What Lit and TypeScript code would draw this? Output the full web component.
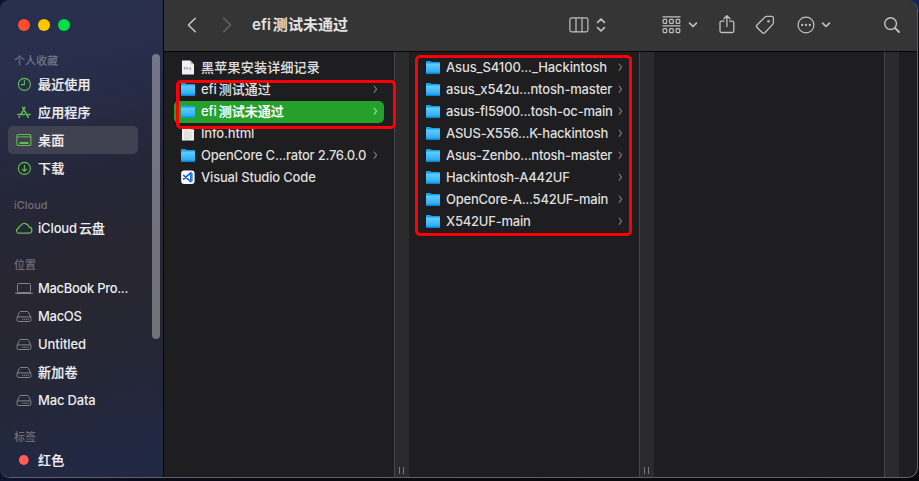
import { LitElement, html, css, svg } from "lit";
import { customElement, property } from "lit/decorators.js";

const icons: Record<string, unknown> = {
  clock: svg`<svg width="16" height="16" viewBox="0 0 16 16"><g fill="none" stroke="currentColor" stroke-width="1.1"><circle cx="8.4" cy="8.4" r="6"/><path d="M8.4 4.4V8.6H5.2" stroke-linecap="round"/></g></svg>`,
  apps: svg`<svg width="16" height="16" viewBox="0 0 16 16"><g fill="none" stroke="currentColor" stroke-width="1.5" stroke-linecap="round"><path d="M6.6 3.4L12.3 13.4M8.9 3.4L4.9 10.4M1.7 10.6H8.6M11.6 10.6H14.1M3.6 12.6L3.2 13.3"/></g></svg>`,
  desktop: svg`<svg width="16" height="16" viewBox="0 0 16 16"><rect x="0.9" y="2.5" width="14" height="11" rx="1.5" fill="none" stroke="currentColor" stroke-width="1.1"/><path d="M1 4.9H15" stroke="currentColor"/><rect x="3.5" y="10.1" width="9" height="1.8" rx=".5" fill="currentColor"/></svg>`,
  down: svg`<svg width="16" height="16" viewBox="0 0 16 16"><g fill="none" stroke="currentColor" stroke-width="1.1" stroke-linecap="round"><circle cx="8.4" cy="8.4" r="6"/><path d="M8.4 5.2V11.2M6.2 9.1L8.4 11.3L10.6 9.1"/></g></svg>`,
  cloud: svg`<svg width="18" height="16" viewBox="0 0 18 16"><path d="M4.6 13.2H13.6A3 3 0 0 0 14.1 7.2A4.7 4.7 0 0 0 5.4 5.9A2.3 2.3 0 0 0 3.6 8.3A2.5 2.5 0 0 0 4.6 13.2Z" fill="none" stroke="currentColor" stroke-width="1.2"/></svg>`,
  laptop: svg`<svg width="18" height="16" viewBox="0 0 18 16"><rect x="2.5" y="3.5" width="13" height="9" rx="1" fill="none" stroke="currentColor"/><path d="M.2 13.3H17.8" stroke="currentColor" stroke-width="1.2"/></svg>`,
  disk: svg`<svg width="16" height="16" viewBox="0 0 16 16"><g fill="none" stroke="currentColor"><path d="M1 9.6L3.3 4.6Q3.8 3.5 5 3.5H11Q12.2 3.5 12.7 4.6L15 9.6"/><rect x="1" y="8.9" width="14" height="4.6" rx="1.7"/><path d="M6 11.2H13" stroke-dasharray="1.4 .6"/></g></svg>`,
  tag: svg`<svg width="16" height="16" viewBox="0 0 16 16"><circle cx="7.8" cy="8" r="4.9" fill="#ff5d55"/></svg>`,
  folder: svg`<svg width="16" height="16" viewBox="0 0 16 16"><defs><linearGradient id="f" x2="0" y2="1"><stop stop-color="#62cdfb"/><stop offset=".5" stop-color="#45bbf8"/><stop offset="1" stop-color="#1da2f1"/></linearGradient></defs><path d="M1 2.6Q1 2 1.6 2H5.2L6.4 2.9H14.4Q15 2.9 15 3.6V13.8Q15 14.6 14.2 14.6H1.8Q1 14.6 1 13.8Z" fill="#1b9fe8"/><path d="M1 4.6H15V13.8Q15 14.6 14.2 14.6H1.8Q1 14.6 1 13.8Z" fill="url(#f)"/><path d="M1.2 14.1H14.8" stroke="#0d8bd9"/></svg>`,
  md: svg`<svg width="16" height="16" viewBox="0 0 16 16"><path d="M2 1.6H10.2L14 5.4V15.4H2Z" fill="#f1f1f1"/><path d="M10.2 1.6V5.4H14Z" fill="#c9c9c9"/><path d="M4.3 10.8V8L5.7 9.6L7.1 8V10.8M10.1 7.9V10.6M8.8 9.5L10.1 10.8L11.4 9.5" fill="none" stroke="#999" stroke-width=".9"/></svg>`,
  page: svg`<svg width="16" height="16" viewBox="0 0 16 16"><path d="M2 1.6H10.4L14 5.2V15.4H2Z" fill="#f1f1f1"/><path d="M10.4 1.6V5.2H14Z" fill="#ccc"/><path d="M4 6H9M4 8H12.2M4 10H12.2M4 12H12.2M4 13.7H10" stroke="#cacaca" stroke-width=".8"/></svg>`,
  code: svg`<svg width="16" height="16" viewBox="0 0 16 16"><rect x="1.2" y="1.5" width="13.4" height="13.4" rx="3" fill="#fff"/><path d="M10.8 3.8V12.6L3.6 6.4M10.8 3.8L3.6 10" fill="none" stroke="#2066cf" stroke-width="1.7" stroke-linejoin="round" stroke-linecap="round"/><path d="M10.8 3.2L12.7 4.2V12.2L10.8 13.2Z" fill="#3284e4"/></svg>`,
};

const toolIcons = {
  back: svg`<svg width="12" height="18" viewBox="0 0 12 18"><path d="M9.3 2.3L2.4 9L9.3 15.7" fill="none" stroke="#c5c5c5" stroke-width="1.6" stroke-linecap="round" stroke-linejoin="round"/></svg>`,
  forward: svg`<svg width="12" height="18" viewBox="0 0 12 18"><path d="M2.7 2.3L9.6 9L2.7 15.7" fill="none" stroke="#636363" stroke-width="1.6" stroke-linecap="round" stroke-linejoin="round"/></svg>`,
  columns: svg`<svg width="20" height="16" viewBox="0 0 20 16"><g fill="none" stroke="currentColor" stroke-width="1.2"><rect x=".9" y=".9" width="18" height="14" rx="1.8"/><path d="M7 1V15M13 1V15"/></g></svg>`,
  updown: svg`<svg width="10" height="16" viewBox="0 0 10 16"><path d="M1.6 5.4L5 2L8.4 5.4M1.6 10.6L5 14L8.4 10.6" fill="none" stroke="currentColor" stroke-width="1.7" stroke-linecap="round" stroke-linejoin="round"/></svg>`,
  group: svg`<svg width="19" height="18" viewBox="0 0 19 18"><g fill="none" stroke="currentColor" stroke-width="1.2"><path d="M.5 .8H18.5M.5 9.8H18.5"/><rect x="1.1" y="3.4" width="3.7" height="4" rx="1"/><rect x="7.6" y="3.4" width="3.7" height="4" rx="1"/><rect x="14.1" y="3.4" width="3.7" height="4" rx="1"/><rect x="1.1" y="12.7" width="3.7" height="4" rx="1"/><rect x="7.6" y="12.7" width="3.7" height="4" rx="1"/><rect x="14.1" y="12.7" width="3.7" height="4" rx="1"/></g></svg>`,
  chevron: svg`<svg width="10" height="8" viewBox="0 0 10 8"><path d="M1.6 2.2L5 5.5L8.4 2.2" fill="none" stroke="currentColor" stroke-width="1.7" stroke-linecap="round" stroke-linejoin="round"/></svg>`,
  share: svg`<svg width="16" height="20" viewBox="0 0 16 20"><g fill="none" stroke="currentColor" stroke-width="1.3" stroke-linecap="round" stroke-linejoin="round"><path d="M5 6.2H2.6Q1 6.2 1 7.8V16Q1 17.5 2.6 17.5H13.2Q14.8 17.5 14.8 16V7.8Q14.8 6.2 13.2 6.2H10.8M7.9 11.6V1M4.9 3.8L7.9 .8L10.9 3.8"/></g></svg>`,
  label: svg`<svg width="20" height="20" viewBox="0 0 20 20"><path d="M11.5 1.4H16.6Q18.4 1.4 18.4 3.2V7.8Q18.4 8.7 17.7 9.4L9.8 17.8Q8.6 19 7.4 17.8L1.9 12.3Q.9 11.2 2 10L9.9 2.1Q10.6 1.4 11.5 1.4Z" fill="none" stroke="currentColor" stroke-width="1.3"/><circle cx="13.5" cy="6.2" r="1.2" fill="currentColor"/></svg>`,
  more: svg`<svg width="18" height="18" viewBox="0 0 18 18"><circle cx="9" cy="9" r="7.9" fill="none" stroke="currentColor" stroke-width="1.2"/><g fill="currentColor"><circle cx="5.2" cy="9" r="1.15"/><circle cx="9" cy="9" r="1.15"/><circle cx="12.8" cy="9" r="1.15"/></g></svg>`,
  search: svg`<svg width="18" height="18" viewBox="0 0 18 18"><circle cx="7.6" cy="7.6" r="5.9" fill="none" stroke="currentColor" stroke-width="1.4"/><path d="M11.9 11.9L16 16" stroke="currentColor" stroke-width="1.9" stroke-linecap="round"/></svg>`,
};

// width: label width in pixels, spread evenly over the glyphs
interface Entry { icon: string; name: string; width: number; dir?: boolean; selected?: boolean; grey?: boolean }

const sidebar: { title: string; items: Entry[] }[] = [
  { title: "个人收藏", items: [
    { icon: "clock", name: "最近使用", width: 52 },
    { icon: "apps", name: "应用程序", width: 52 },
    { icon: "desktop", name: "桌面", width: 26, selected: true },
    { icon: "down", name: "下载", width: 26 },
  ] },
  { title: "iCloud", items: [{ icon: "cloud", name: "iCloud云盘", width: 66 }] },
  { title: "位置", items: [
    { icon: "laptop", name: "MacBook Pro...", width: 89.5, grey: true },
    { icon: "disk", name: "MacOS", width: 43, grey: true },
    { icon: "disk", name: "Untitled", width: 47.5, grey: true },
    { icon: "disk", name: "新加卷", width: 39, grey: true },
    { icon: "disk", name: "Mac Data", width: 57, grey: true },
  ] },
  { title: "标签", items: [{ icon: "tag", name: "红色", width: 26 }] },
];

const first: Entry[] = [
  { icon: "md", name: "黑苹果安装详细记录", width: 118.5 },
  { icon: "folder", name: "efi测试通过", width: 69, dir: true },
  { icon: "folder", name: "efi测试未通过", width: 82, dir: true, selected: true },
  { icon: "page", name: "Info.html", width: 52.5 },
  { icon: "folder", name: "OpenCore C...rator 2.76.0.0", width: 164.5, dir: true },
  { icon: "code", name: "Visual Studio Code", width: 114 },
];

const second: Entry[] = [
  { icon: "folder", name: "Asus_S4100..._Hackintosh", width: 160.5, dir: true },
  { icon: "folder", name: "asus_x542u...ntosh-master", width: 165.5, dir: true },
  { icon: "folder", name: "asus-fl5900...tosh-oc-main", width: 166, dir: true },
  { icon: "folder", name: "ASUS-X556...K-hackintosh", width: 161.5, dir: true },
  { icon: "folder", name: "Asus-Zenbo...ntosh-master", width: 165.5, dir: true },
  { icon: "folder", name: "Hackintosh-A442UF", width: 123, dir: true },
  { icon: "folder", name: "OpenCore-A...542UF-main", width: 161.5, dir: true },
  { icon: "folder", name: "X542UF-main", width: 84, dir: true },
];

@customElement("fit-label")
class FitLabel extends LitElement {
  @property() text = "";
  @property({ type: Number }) width = 0;
  static styles = css`
    :host { display: block; white-space: nowrap; }
    .t { display: inline-block; }
    .cjk { -webkit-text-stroke: var(--cjk-stroke, 0.2px) currentColor; }
    .latin + .cjk { margin-left: 2px; }
  `;
  render() {
    const [, latin, cjk] = this.text.match(/^([\x00-\x7f]*)(.*)$/)!;
    return html`<span class="t">${latin ? html`<span class="latin">${latin}</span>` : ""}${cjk ? html`<span class="cjk">${cjk}</span>` : ""}</span>`;
  }
  updated() {
    const span = this.renderRoot.querySelector<HTMLElement>(".t")!;
    span.style.letterSpacing = "0px";
    const natural = span.getBoundingClientRect().width;
    span.style.letterSpacing = `${(this.width - natural + 0.6) / this.text.length}px`;
  }
}

@customElement("app-root")
class AppRoot extends LitElement {
  static styles = css`
    :host { display: block; width: 919px; height: 481px; overflow: hidden; background: linear-gradient(90deg, #0d1434 0, #090a16 20%, #08080c 60%, #07080f 100%); font: 500 13px/22px Inter, "Noto Sans CJK SC", sans-serif; color: #dedede; }
    * { box-sizing: border-box; }
    svg { display: block; flex: none; }
    .desk { height: 481px; background: linear-gradient(#16235c, #16235c) 100% 0 / 12px 12px no-repeat; }
    .window { position: relative; display: flex; width: 918px; height: 478px; border: solid #626264; border-width: 0 1px 1px 0; border-radius: 9px 10px 10px 10px; overflow: hidden; background: #1e1e20; }
    .side { position: relative; width: 163px; flex: none; background: linear-gradient(165deg, #293050 0, #272d49 20%, #252638 38%, #28262f 58%, #262735 73%, #22283f 88%, #212844 100%); }
    .lights { display: flex; gap: 8px; padding: 19px 0 0 18px; height: 38px; }
    .light { width: 12px; height: 12px; border-radius: 50%; }
    .r { background: #ff4e2c; } .y { background: #ffc600; } .g { background: #00df46; }
    .title { height: 32px; padding: 12px 0 0 14px; font-size: 11px; line-height: 22px; color: #73758a; }
    .title.low { color: #6d6d79; }
    .item { display: flex; align-items: center; height: 28px; margin: 0 25px 0 8px; border-radius: 5px; color: #eeeef1; white-space: nowrap; }
    .item.selected { background: #404150; }
    .ic { width: 30px; display: flex; justify-content: center; color: #61bf4d; margin-left: 1px; margin-right: -1px; }
    .ic.grey { color: #838389; }
    .scroll { position: absolute; left: 152px; top: 54px; width: 8px; height: 285px; border-radius: 4px; background: linear-gradient(#737588, #717176); }
    .main { flex: 1; min-width: 0; display: flex; flex-direction: column; border-left: 1px solid #050508; }
    .bar { height: 52px; flex: none; display: flex; align-items: center; background: #353535; border-bottom: 1px solid #040404; color: #c0c0c0; padding: 0 16px 1px 22px; }
    .heading { font-size: 15px; font-weight: 600; color: #e4e4e4; margin-left: 19px; width: 316.5px; --cjk-stroke: 0px; }
    .fwd { margin-left: 23px; }
    .s1 { margin-left: 7.5px; } .s2 { margin-left: 56px; } .s3 { margin-left: 7px; }
    .s4 { margin-left: 21px; } .s5 { margin-left: 20px; } .s6 { margin-left: 22px; } .s7 { margin-left: 6px; } .s8 { margin-left: auto; }
    .cols { flex: 1; display: flex; min-height: 0; }
    .col { width: 230px; flex: none; padding: 5px 10px; --cjk-stroke: 0.1px; }
    .row { display: flex; align-items: center; height: 22px; padding: 0 6px 2px 6px; border-radius: 5px; }
    .row .label { margin-left: 5px; flex: 1; line-height: 20px; }
    .row.selected { margin-top: 0; background: #25a02b; color: #fff; --cjk-stroke: 0.25px; }
    .arrow { color: #7c7c7e; }
    .selected .arrow { color: #9bdc9d; }
    .grip { width: 15px; flex: none; background: #2b2b2d; border-left: 1px solid #464648; display: flex; justify-content: flex-start; align-items: flex-end; gap: 3px; padding: 0 0 3px 4px; }
    .grip i { width: 1px; height: 7px; background: #77777a; }
    .mark { position: absolute; border: 3px solid #fb0006; border-radius: 5px; }
    .m1 { left: 175.5px; top: 80px; width: 220.5px; height: 48.5px; }
    .m2 { left: 415px; top: 55px; width: 217px; height: 181px; }
  `;

  row(e: Entry) {
    return html`<div class="row ${e.selected ? "selected" : ""}">${icons[e.icon]}
      <fit-label class="label" .text=${e.name} .width=${e.width}></fit-label>
      ${e.dir ? html`<svg class="arrow" width="6" height="10" viewBox="0 0 6 10"><path d="M2.1 2L4.6 5.2L2.1 8.4" fill="none" stroke="currentColor" stroke-width="1.1" stroke-linecap="round" stroke-linejoin="round"/></svg>` : ""}
    </div>`;
  }

  render() {
    const grip = html`<div class="grip"><i></i><i></i></div>`;
    return html`<div class="desk"><div class="window">
      <aside class="side">
        <div class="lights"><span class="light r"></span><span class="light y"></span><span class="light g"></span></div>
        ${sidebar.map((g, i) => html`<div class="title ${i ? "low" : ""}">${g.title}</div>
          ${g.items.map((e) => html`<div class="item ${e.selected ? "selected" : ""}">
            <span class="ic ${e.grey ? "grey" : ""}">${icons[e.icon]}</span>
            <fit-label .text=${e.name} .width=${e.width}></fit-label></div>`)}`)}
        <div class="scroll"></div>
      </aside>
      <main class="main">
        <header class="bar">
          ${toolIcons.back}<span class="fwd">${toolIcons.forward}</span>
          <fit-label class="heading" .text=${"efi测试未通过"} .width=${95.5}></fit-label>
          ${toolIcons.columns}<span class="s1">${toolIcons.updown}</span>
          <span class="s2">${toolIcons.group}</span><span class="s3">${toolIcons.chevron}</span>
          <span class="s4">${toolIcons.share}</span><span class="s5">${toolIcons.label}</span>
          <span class="s6">${toolIcons.more}</span><span class="s7">${toolIcons.chevron}</span>
          <span class="s8">${toolIcons.search}</span>
        </header>
        <div class="cols">
          <div class="col">${first.map((e) => this.row(e))}</div>${grip}
          <div class="col">${second.map((e) => this.row(e))}</div>${grip}
          <div class="col"></div><div class="grip"></div>
        </div>
      </main>
      <div class="mark m1"></div><div class="mark m2"></div>
    </div></div>`;
  }
}
